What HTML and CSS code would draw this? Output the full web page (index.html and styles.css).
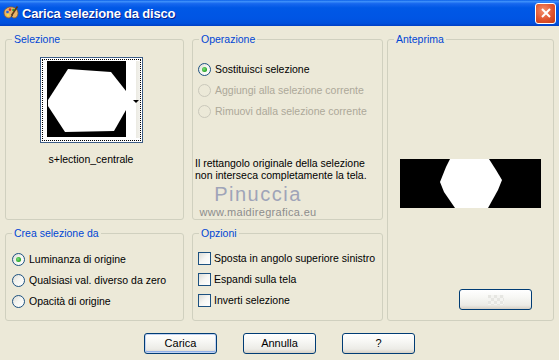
FILE: index.html
```html
<!DOCTYPE html>
<html lang="it">
<head>
    <meta charset="UTF-8">
    <title>Carica selezione da disco</title>
    <link rel="stylesheet" href="styles.css">
</head>
<body>
    <div class="window">
        <div class="titlebar">
            <svg class="app-icon" width="16" height="16" viewBox="0 0 16 16">
                <path d="M8 2C4 2 1 4.5 1 8c0 3 2.5 5 5 5 1.5 0 1.5-1.5 2.5-1.5s1 1.5 2.5 1.5c2.5 0 4-2 4-4.5C15 4.5 12 2 8 2z" fill="#e8b46a" stroke="#8a5a22" stroke-width="0.8"/>
                <circle cx="4.5" cy="7" r="1.3" fill="#2a62d8"/>
                <circle cx="7" cy="4.6" r="1.3" fill="#d42a2a"/>
                <circle cx="10.5" cy="5" r="1.3" fill="#2aa12a"/>
                <circle cx="5" cy="10" r="1.2" fill="#f2e23a"/>
                <path d="M14.5 1.5L8.5 10.5" stroke="#5a3a1a" stroke-width="1.6"/>
                <path d="M9 9.8l-1.2 2.4 2.2-1.6z" fill="#333"/>
            </svg>
            <div class="title">Carica selezione da disco</div>
            <div class="close-btn">
                <svg width="12" height="12" viewBox="0 0 12 12">
                    <path d="M2 2L10 10M10 2L2 10" stroke="#fff" stroke-width="2"/>
                </svg>
            </div>
        </div>

        <div class="content">
            <div class="col col-left">
                <fieldset class="group group-top">
                    <legend>Selezione</legend>
                    <div class="sel-box">
                        <div class="thumb">
                            <div class="thumb-focus">
                                <svg class="thumb-img" width="79" height="76" viewBox="0 0 79 76">
                                    <rect width="79" height="76" fill="#000"/>
                                    <polygon points="21,8 64,11 79,30 79,49 67,70 18,71 1,45 1,39" fill="#fff"/>
                                </svg>
                                <div class="thumb-strip">
                                    <div class="drop-arrow"></div>
                                </div>
                            </div>
                        </div>
                        <div class="thumb-name">s+lection_centrale</div>
                    </div>
                </fieldset>

                <fieldset class="group group-bottom">
                    <legend>Crea selezione da</legend>
                    <div class="options crea-list">
                        <div class="option"><span class="radio checked"></span>Luminanza di origine</div>
                        <div class="option"><span class="radio"></span>Qualsiasi val. diverso da zero</div>
                        <div class="option"><span class="radio"></span>Opacità di origine</div>
                    </div>
                </fieldset>
            </div>

            <div class="col col-mid">
                <fieldset class="group group-top">
                    <legend>Operazione</legend>
                    <div class="options op-list">
                        <div class="option"><span class="radio checked"></span>Sostituisci selezione</div>
                        <div class="option disabled"><span class="radio"></span>Aggiungi alla selezione corrente</div>
                        <div class="option disabled"><span class="radio"></span>Rimuovi dalla selezione corrente</div>
                    </div>
                    <p class="info">Il rettangolo originale della selezione non interseca completamente la tela.</p>
                </fieldset>

                <fieldset class="group group-bottom">
                    <legend>Opzioni</legend>
                    <div class="options opz-list">
                        <div class="option"><span class="check"></span>Sposta in angolo superiore sinistro</div>
                        <div class="option"><span class="check"></span>Espandi sulla tela</div>
                        <div class="option"><span class="check"></span>Inverti selezione</div>
                    </div>
                </fieldset>
            </div>

            <fieldset class="group group-preview">
                <legend>Anteprima</legend>
                <svg class="preview-img" width="141" height="49" viewBox="0 0 141 49">
                    <rect width="141" height="49" fill="#000"/>
                    <polygon points="50,0 89,0 96,11 102,21 98,31 88,49 55,49 44,33 40,23 46,8" fill="#fff"/>
                </svg>
                <div class="btn small-btn"><span class="checker"></span></div>
            </fieldset>
        </div>

        <div class="buttons">
            <div class="btn default">Carica</div>
            <div class="btn">Annulla</div>
            <div class="btn">?</div>
        </div>

        <div class="watermark">
            <div class="wm-name">Pinuccia</div>
            <div class="wm-url">www.maidiregrafica.eu</div>
        </div>
    </div>
</body>
</html>
```

FILE: styles.css
```css
* {
    box-sizing: border-box;
}

body {
    margin: 0;
    font-family: 'Liberation Sans', Arial, sans-serif;
    font-size: 10.5px;
    color: #000;
    background: #ece9d8;
}

.window {
    position: relative;
    width: 559px;
    height: 360px;
    background: #ece9d8;
    overflow: hidden;
}

/* title bar */

.titlebar {
    height: 26px;
    display: flex;
    align-items: center;
    padding: 0 3px 0 3px;
    background: linear-gradient(to bottom, #0a5fe8 0%, #3d8ffa 6%, #1767ee 14%, #0058e6 30%, #0055e4 70%, #0050dc 90%, #003fc4 100%);
}

.app-icon {
    margin-right: 3px;
    flex-shrink: 0;
}

.title {
    color: #fff;
    font-weight: bold;
    font-size: 13px;
    letter-spacing: -0.2px;
    text-shadow: 1px 1px 0 #0a1f8a;
}

.close-btn {
    margin-left: auto;
    width: 21px;
    height: 21px;
    border: 1px solid #fff;
    border-radius: 3px;
    background: radial-gradient(circle at 40% 35%, #f3906e 0%, #e0542e 55%, #c13a14 100%);
    display: flex;
    align-items: center;
    justify-content: center;
}

/* group boxes */

.content {
    display: flex;
    padding: 7px 0 0 5px;
}

.col {
    display: flex;
    flex-direction: column;
    gap: 7px;
}

.col-left {
    width: 179px;
    margin-right: 8px;
}

.col-mid {
    width: 191px;
    margin-right: 4px;
}

.group {
    margin: 0;
    padding: 0;
    border: 1px solid #d0d0bf;
    border-radius: 3px;
    min-width: 0;
}

.group legend {
    color: #0046d5;
    line-height: 13px;
    padding: 0 2px;
    margin-left: 6px;
}

.group-top {
    height: 187px;
}

.group-bottom {
    height: 94px;
}

.group-preview {
    width: 167px;
    height: 288px;
}

/* selezione */

.sel-box {
    display: flex;
    flex-direction: column;
    align-items: center;
    padding-right: 7px;
}

.thumb {
    margin-top: 11px;
    width: 103px;
    height: 86px;
    border: 1px solid #3d5d86;
    padding: 1px;
    background: #fff;
}

.thumb-focus {
    height: 100%;
    border: 1px dotted #000;
    display: flex;
    align-items: flex-start;
    padding: 1px 0 0 4px;
}

.thumb-img {
    display: block;
    flex-shrink: 0;
}

.thumb-strip {
    flex: 1;
    align-self: stretch;
    background: linear-gradient(to right, #fff 0%, #fff 70%, #ecebe4 75%, #f4f3ee 100%);
    display: flex;
    align-items: center;
    justify-content: flex-end;
    padding-right: 1px;
    margin-bottom: 2px;
}

.drop-arrow {
    width: 0;
    height: 0;
    border-left: 3px solid transparent;
    border-right: 3px solid transparent;
    border-top: 3px solid #000;
    margin-top: 4px;
}

.thumb-name {
    margin-top: 10px;
    line-height: 13px;
}

/* radio + check lists */

.options {
    display: flex;
    flex-direction: column;
    gap: 8px;
}

.op-list {
    padding: 17px 0 0 5px;
}

.crea-list {
    padding: 13px 0 0 6px;
}

.opz-list {
    padding: 12px 0 0 5px;
}

.option {
    display: flex;
    align-items: center;
    height: 13px;
    line-height: 13px;
    white-space: nowrap;
}

.option.disabled {
    color: #aca899;
}

.radio {
    width: 13px;
    height: 13px;
    border-radius: 50%;
    border: 1px solid #1c5180;
    background: linear-gradient(135deg, #dcdcd5 0%, #f4f4f0 45%, #fff 100%);
    margin-right: 4px;
    flex-shrink: 0;
    display: flex;
    align-items: center;
    justify-content: center;
}

.radio.checked::after {
    content: '';
    width: 5px;
    height: 5px;
    border-radius: 50%;
    background: radial-gradient(circle at 40% 40%, #7ee07e 0%, #21a121 70%);
}

.disabled .radio {
    border-color: #cac8bb;
    background: #ece9d8;
}

.check {
    width: 13px;
    height: 13px;
    border: 1px solid #1c5180;
    background: linear-gradient(135deg, #dcdcd7 0%, #f6f6f3 50%, #fff 100%);
    margin-right: 3px;
    flex-shrink: 0;
}

.info {
    margin: 39px 0 0 2px;
    line-height: 12px;
}

/* anteprima */

.preview-img {
    display: block;
    margin: 113px auto 0;
}

.small-btn {
    width: 37px;
    height: 19px;
    margin: 81px 0 0 71px;
}

.checker {
    display: block;
    width: 16px;
    height: 10px;
    background: repeating-conic-gradient(#f4f4f1 0% 25%, #e6e6e2 0% 50%) 0 0 / 6px 6px;
}

/* buttons */

.buttons {
    display: flex;
    justify-content: center;
    gap: 26px;
    margin-top: 12px;
}

.btn {
    width: 73px;
    height: 21px;
    border: 1px solid #003c74;
    border-radius: 3px;
    background: linear-gradient(to bottom, #fff 0%, #f7f7f4 40%, #ecebe6 80%, #d6d0c5 100%);
    display: flex;
    align-items: center;
    justify-content: center;
    line-height: 13px;
    font-size: 11px;
}

.btn.default {
    box-shadow: inset 0 0 0 1px #c2d3f2, inset 0 -1px 0 1px #92b0e8;
}

/* watermark over the dialog */

.watermark {
    position: absolute;
    left: 196px;
    top: 183px;
    text-align: center;
    width: 124px;
}

.wm-name {
    color: #9fa4b8;
    font-size: 20px;
    letter-spacing: 1.5px;
    line-height: 22px;
}

.wm-url {
    color: #8d8d8d;
    font-size: 11px;
    letter-spacing: 0.3px;
    line-height: 13px;
    margin-top: 1px;
}
```
